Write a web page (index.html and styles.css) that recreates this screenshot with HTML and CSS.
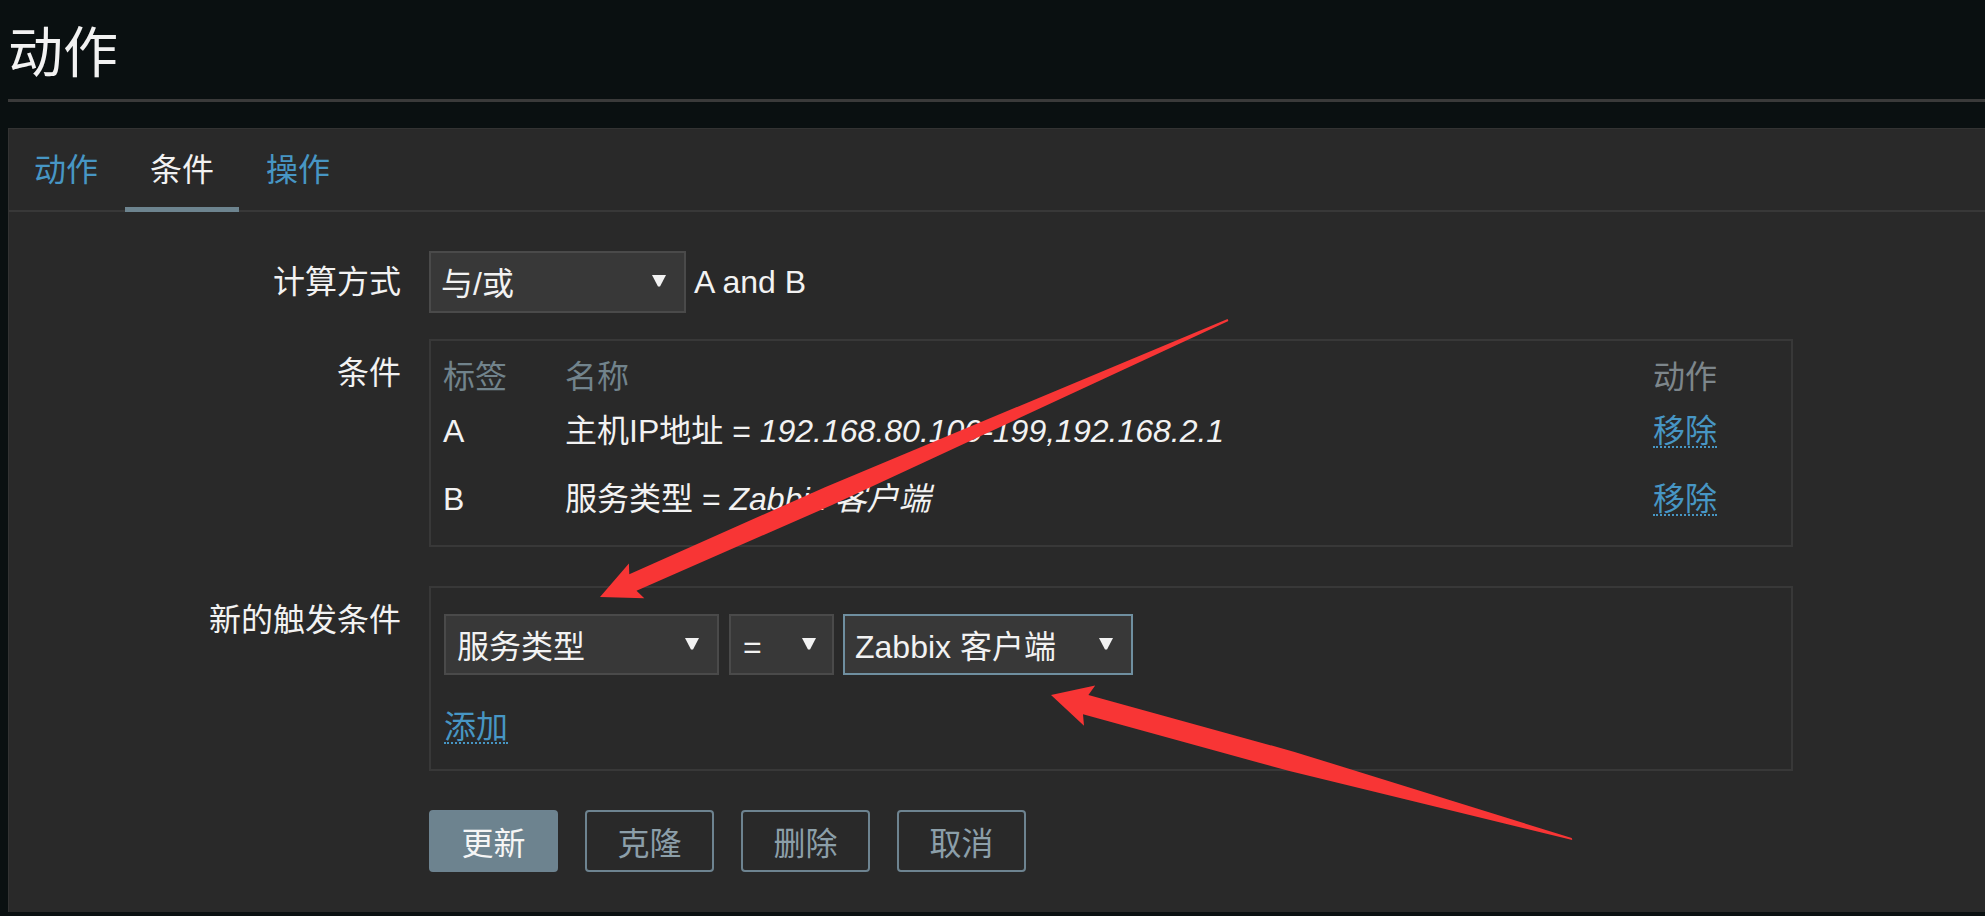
FILE: index.html
```html
<!DOCTYPE html>
<html lang="zh">
<head>
<meta charset="utf-8">
<title>动作</title>
<link rel="stylesheet" href="styles.css">
</head>
<body>
<header class="page-header">
  <h1 class="page-title">动作</h1>
</header>

<main class="panel">
  <nav class="tabs">
    <a class="tab">动作</a>
    <a class="tab tab-active">条件</a>
    <a class="tab">操作</a>
  </nav>

  <div class="form">
    <div class="form-row row-calc">
      <div class="label">计算方式</div>
      <div class="control inline">
        <div class="select select-calc"><span>与/或</span><svg class="caret" viewBox="0 0 14 12"><path d="M0 0H14L8 11.5H6Z" fill="#f2f2f2"/></svg></div>
        <span class="formula">A and B</span>
      </div>
    </div>

    <div class="form-row row-cond">
      <div class="label label-top">条件</div>
      <div class="control">
        <div class="box ctable">
          <div class="chead">
            <span class="c1">标签</span>
            <span class="c2">名称</span>
            <span class="c3 head-action">动作</span>
          </div>
          <div class="crow">
            <span class="c1">A</span>
            <span class="c2">主机IP地址 = <i>192.168.80.100-199,192.168.2.1</i></span>
            <span class="c3"><a class="link">移除</a></span>
          </div>
          <div class="crow">
            <span class="c1">B</span>
            <span class="c2">服务类型 = <i>Zabbix 客户端</i></span>
            <span class="c3"><a class="link">移除</a></span>
          </div>
        </div>
      </div>
    </div>

    <div class="form-row row-new">
      <div class="label label-top">新的触发条件</div>
      <div class="control">
        <div class="box newbox">
          <div class="selects">
            <div class="select select-type"><span>服务类型</span><svg class="caret" viewBox="0 0 14 12"><path d="M0 0H14L8 11.5H6Z" fill="#f2f2f2"/></svg></div>
            <div class="select select-op"><span>=</span><svg class="caret" viewBox="0 0 14 12"><path d="M0 0H14L8 11.5H6Z" fill="#f2f2f2"/></svg></div>
            <div class="select select-val"><span>Zabbix 客户端</span><svg class="caret" viewBox="0 0 14 12"><path d="M0 0H14L8 11.5H6Z" fill="#f2f2f2"/></svg></div>
          </div>
          <div class="add-line"><a class="link">添加</a></div>
        </div>
      </div>
    </div>

    <div class="buttons">
      <button class="btn btn-primary">更新</button>
      <button class="btn">克隆</button>
      <button class="btn">删除</button>
      <button class="btn">取消</button>
    </div>
  </div>
</main>

<svg class="annotations" width="1985" height="916" viewBox="0 0 1985 916">
  <polygon fill="#f83535" points="600,597 644.3,598.2 636.5,590.7 832.6,504.8 1228.4,320.9 1227.6,319.1 825,487.2 629.3,574.3 628.9,563.4"/>
  <polygon fill="#f83535" points="1051,695 1095.2,685.4 1088.4,695 1294.6,751.9 1571.7,838 1572.3,840 1289.4,771.1 1083,714.2 1084,725.8"/>
</svg>
</body>
</html>
```

FILE: styles.css
```css
html, body {
  margin: 0;
  padding: 0;
}

body {
  position: relative;
  width: 1985px;
  height: 916px;
  overflow: hidden;
  background: #0a1011;
  color: #f2f2f2;
  font-family: "Liberation Sans", "Noto Sans CJK SC", sans-serif;
  font-size: 32px;
}

.page-header {
  margin: 0 0 0 8px;
  padding: 23px 0 16px;
  border-bottom: 3px solid #3a3a3a;
}

.page-title {
  margin: 0;
  font-size: 55px;
  font-weight: normal;
  line-height: 60px;
  color: #f2f2f2;
}

.panel {
  margin: 26px 0 0 8px;
  height: 784px;
  box-sizing: border-box;
  background: #292929;
  border-top: 1px solid #333;
  border-left: 1px solid #333;
}

.tabs {
  display: flex;
  height: 81px;
  border-bottom: 2px solid #383838;
}

.tab {
  display: block;
  height: 83px;
  box-sizing: border-box;
  padding: 25px 25px 0;
  margin-right: 2px;
  margin-bottom: -2px;
  line-height: 32px;
  color: #4796c4;
  border-bottom: 5px solid transparent;
}

.tab-active {
  color: #f2f2f2;
  border-bottom-color: #6d848f;
}

.form {
  padding-top: 39px;
}

.form-row {
  display: grid;
  grid-template-columns: 392px auto;
  column-gap: 28px;
}

.row-calc {
  align-items: center;
}

.row-cond {
  margin-top: 26px;
}

.row-new {
  margin-top: 39px;
}

.label {
  text-align: right;
  line-height: 32px;
  color: #f2f2f2;
}

.label-top {
  padding-top: 18px;
}

.control.inline {
  display: flex;
  align-items: center;
}

.select {
  display: flex;
  align-items: center;
  justify-content: space-between;
  box-sizing: border-box;
  height: 62px;
  padding: 4px 18px 0 10px;
  background: #383838;
  border: 2px solid #4a4a4a;
  color: #f2f2f2;
  line-height: 32px;
}

.caret {
  width: 14px;
  height: 12px;
  margin-top: -6px;
  flex: none;
}

.select-calc {
  width: 257px;
}

.formula {
  margin-left: 8px;
  color: #f2f2f2;
}

.box {
  width: 1364px;
  box-sizing: border-box;
  border: 2px solid #383838;
}

.ctable {
  padding: 16px 12px 12px;
}

.chead, .crow {
  display: flex;
  align-items: center;
  line-height: 32px;
}

.chead {
  height: 40px;
  color: #71838c;
}

.crow {
  height: 68px;
}

.c1 {
  width: 122px;
  flex: none;
}

.c2 {
  width: 1088px;
  flex: none;
  white-space: nowrap;
}

.c2 i {
  font-style: italic;
}

.head-action {
  color: #7d868b;
}

.link {
  display: inline-block;
  color: #4796c4;
  line-height: 30px;
  border-bottom: 2px dotted #4796c4;
  cursor: pointer;
}

.newbox {
  padding: 26px 13px 26px;
}

.selects {
  display: flex;
}

.select-type {
  width: 275px;
  height: 61px;
  padding-left: 11px;
}

.select-op {
  width: 105px;
  height: 61px;
  margin-left: 10px;
  padding-left: 12px;
  padding-right: 16px;
}

.select-val {
  width: 290px;
  height: 61px;
  margin-left: 9px;
  padding-left: 10px;
  border-color: #6f8fa0;
}

.add-line {
  margin-top: 34px;
  height: 34px;
}

.buttons {
  display: flex;
  gap: 27px;
  margin: 39px 0 0 420px;
}

.btn {
  width: 129px;
  height: 62px;
  box-sizing: border-box;
  border: 2px solid #6d8390;
  border-radius: 4px;
  background: transparent;
  color: #8c9fa9;
  font-family: "Liberation Sans", "Noto Sans CJK SC", sans-serif;
  font-size: 32px;
  padding: 0;
}

.btn-primary {
  background: #6d838f;
  color: #f5f5f5;
}

.annotations {
  position: absolute;
  top: 0;
  left: 0;
  pointer-events: none;
}
```
